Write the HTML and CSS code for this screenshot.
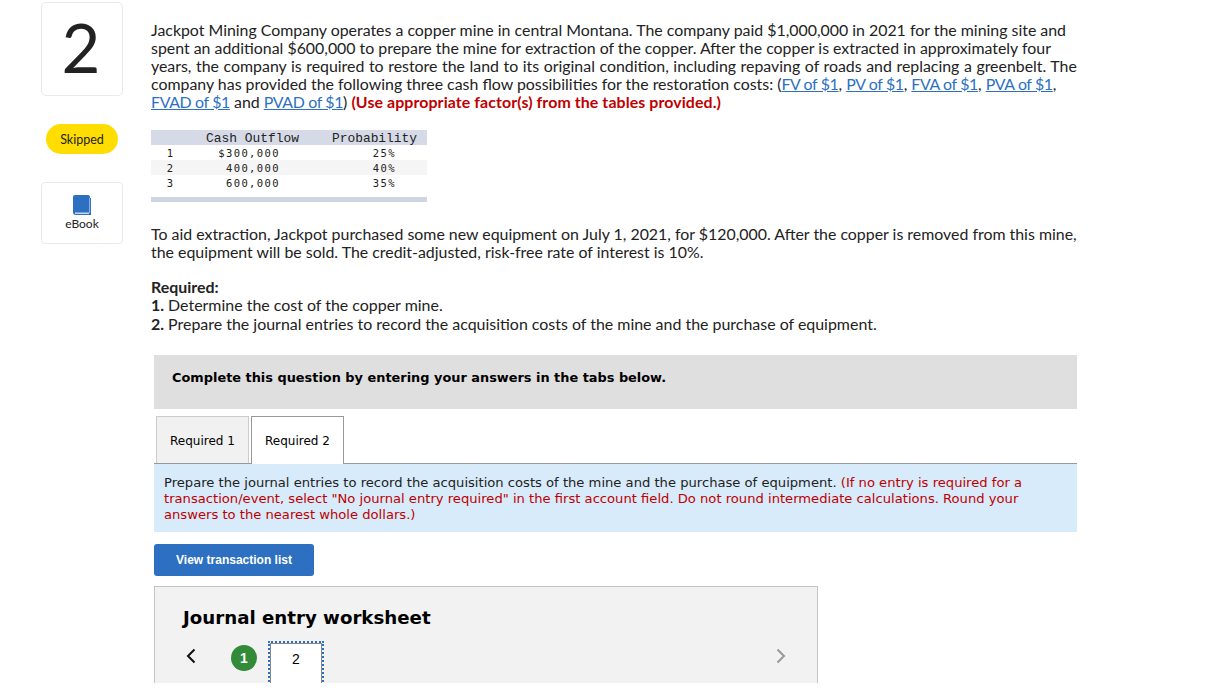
FILE: index.html
```html
<!DOCTYPE html>
<html lang="en">
<head>
    <meta charset="UTF-8">
    <title>Question 2</title>
    <link rel="stylesheet" href="styles.css">
</head>
<body>
    <div class="page">
        <div class="side">
            <div class="number">2</div>
            <div class="skipped">Skipped</div>
            <div class="ebook">
                <svg class="book" width="18" height="20" viewBox="0 0 18 20">
                    <path d="M2 0h13a2 2 0 0 1 2 2v1h1v17H3a3 3 0 0 1-3-3V2a2 2 0 0 1 2-2z" fill="#2d70c2"/>
                    <path d="M2 18.2h14" stroke="#dce9f7" stroke-width="1.3" fill="none"/>
                    <path d="M16.6 3v15" stroke="#a9c6e8" stroke-width=".8" fill="none"/>
                </svg>
                <span>eBook</span>
            </div>
        </div>
        <div class="main">
            <p class="question">Jackpot Mining Company operates a copper mine in central Montana. The company paid $1,000,000 in 2021 for the mining site and<br>
            spent an additional $600,000 to prepare the mine for extraction of the copper. After the copper is extracted in approximately four<br>
            <span class="wide">years, the company is required to restore the land to its original condition, including repaving of roads and replacing a greenbelt. The</span><br>
            company has provided the following three cash flow possibilities for the restoration costs: (<a href="#">FV of $1</a>, <a href="#">PV of $1</a>, <a href="#">FVA of $1</a>, <a href="#">PVA of $1</a>,<br>
            <a href="#">FVAD of $1</a> and <a href="#">PVAD of $1</a>) <b class="red">(Use appropriate factor(s) from the tables provided.)</b></p>

            <table class="flows">
                <tr class="head"><td class="c1"></td><td class="c2">Cash Outflow</td><td class="c3">Probability</td></tr>
                <tr><td class="c1">1</td><td class="c2 num">$300,000</td><td class="c3 num">25%</td></tr>
                <tr class="alt"><td class="c1">2</td><td class="c2 num">400,000</td><td class="c3 num">40%</td></tr>
                <tr><td class="c1">3</td><td class="c2 num">600,000</td><td class="c3 num">35%</td></tr>
                <tr class="spacer"><td colspan="3"></td></tr>
            </table>

            <p class="para aid">To aid extraction, Jackpot purchased some new equipment on July 1, 2021, for $120,000. After the copper is removed from this mine,<br>
            the equipment will be sold. The credit-adjusted, risk-free rate of interest is 10%.</p>

            <p class="para req"><b>Required:</b><br>
            <b>1.</b> Determine the cost of the copper mine.<br>
            <b>2.</b> Prepare the journal entries to record the acquisition costs of the mine and the purchase of equipment.</p>

            <div class="work">
                <div class="complete">Complete this question by entering your answers in the tabs below.</div>
                <div class="tabs">
                    <div class="tab">Required 1</div>
                    <div class="tab active">Required 2</div>
                </div>
                <div class="prompt">Prepare the journal entries to record the acquisition costs of the mine and the purchase of equipment. <span class="red">(If no entry is required for a<br>
                transaction/event, select "No journal entry required" in the first account field. Do not round intermediate calculations. Round your<br>
                answers to the nearest whole dollars.)</span></div>
                <button class="view">View transaction list</button>
                <div class="sheet">
                    <h3>Journal entry worksheet</h3>
                    <div class="steps">
                        <svg class="arrow" width="10" height="16" viewBox="0 0 10 16"><path d="M8.5 1.5 2 8l6.5 6.5" stroke="#111" stroke-width="2" fill="none"/></svg>
                        <span class="done">1</span>
                        <span class="current">2</span>
                        <svg class="arrow next" width="10" height="16" viewBox="0 0 10 16"><path d="M1.5 1.5 8 8l-6.5 6.5" stroke="#999" stroke-width="2" fill="none"/></svg>
                    </div>
                </div>
            </div>
        </div>
    </div>
</body>
</html>
```
FILE: styles.css
```css
html, body {
    margin: 0;
    background-color: white;
}
.page {
    display: flex;
    height: 683px;
    overflow: hidden;
    font-family: Lato, "Open Sans", sans-serif;
    color: #222;
}
.side {
    width: 82px;
    margin: 2px 0 0 41px;
    display: flex;
    flex-direction: column;
    align-items: center;
    flex-shrink: 0;
}
.number {
    box-sizing: border-box;
    width: 82px;
    height: 94px;
    padding-right: 2px;
    border: 1px solid #eaeaea;
    border-radius: 5px;
    text-align: center;
    font-size: 67px;
    line-height: 88px;
}
.skipped {
    width: 72px;
    height: 30px;
    margin-top: 28px;
    border-radius: 15px;
    background-color: #ffdd00;
    text-align: center;
    font-size: 12.5px;
    line-height: 31px;
}
.ebook {
    box-sizing: border-box;
    width: 82px;
    height: 62px;
    margin-top: 28px;
    border: 1px solid #eaeaea;
    border-radius: 4px;
    display: flex;
    flex-direction: column;
    align-items: center;
    font-size: 12px;
    line-height: 15px;
    padding-top: 12px;
}
.ebook span {
    margin-top: 1px;
}
.main {
    margin-left: 28px;
    width: 926px;
    padding-top: 21px;
    font-size: 15.9px;
    line-height: 18px;
}
.question, .para {
    margin: 0;
    white-space: nowrap;
}
.question a {
    color: #2d70c2;
    letter-spacing: -0.35px;
}
.question .red {
    letter-spacing: 0.1px;
}
.wide {
    word-spacing: 0.5px;
}
.red {
    color: #c00000;
}
.flows {
    margin-top: 19px;
    width: 276px;
    table-layout: fixed;
    border-collapse: collapse;
    border-bottom: 5px solid #ced6e3;
    font-family: "Liberation Mono", monospace;
    font-size: 12.9px;
    line-height: 13px;
}
.flows td {
    height: 13px;
    padding: 2px 0 0;
    text-align: center;
}
.flows .head {
    background-color: #d5dae6;
}
.flows .alt {
    background-color: #f5f5f5;
}
.flows .c1 {
    width: 38px;
    font-family: "DejaVu Sans Mono", monospace;
    font-size: 10.5px;
}
.flows .c2 {
    width: 127px;
}
.flows .head .c3 {
    padding-left: 6px;
}
.flows .num {
    font-family: "DejaVu Sans Mono", monospace;
    font-size: 10.5px;
    letter-spacing: 1.4px;
    text-align: right;
}
.flows .c2.num {
    padding-right: 36px;
}
.flows .c3.num {
    padding-right: 31px;
}
.flows .spacer td {
    height: 7px;
    padding: 0;
    line-height: 7px;
}
.aid {
    margin-top: 23px;
}
.req {
    margin-top: 17px;
    font-size: 15.95px;
    line-height: 18.4px;
}
.work {
    margin: 22px 0 0 3px;
    font-family: "DejaVu Sans", Verdana, sans-serif;
    color: black;
}
.complete {
    width: 923px;
    box-sizing: border-box;
    height: 54px;
    padding: 14px 18px;
    background-color: #dfdfdf;
    font-size: 12.9px;
    font-weight: bold;
}
.tabs {
    display: flex;
    gap: 2px;
    margin: 7px 0 0 2px;
    height: 47px;
}
.tab {
    box-sizing: border-box;
    width: 93px;
    height: 47px;
    border: 1px solid #ccc;
    border-bottom: none;
    background-color: #f1f1f1;
    font-size: 12px;
    line-height: 48px;
    text-align: center;
}
.tab.active {
    border-color: #999;
    background-color: white;
    height: 48px;
    position: relative;
    z-index: 1;
}
.prompt {
    box-sizing: border-box;
    width: 923px;
    height: 69px;
    padding: 11px 10px;
    border-top: 1px solid #999;
    background-color: #d7ebfa;
    font-size: 13.13px;
    line-height: 16px;
    white-space: nowrap;
    color: #222;
}
.view {
    display: block;
    width: 160px;
    height: 32px;
    margin-top: 12px;
    border: none;
    border-radius: 3px;
    background-color: #2d70c2;
    color: white;
    font-family: "Liberation Sans", Arial, sans-serif;
    font-size: 12px;
    font-weight: bold;
}
.sheet {
    box-sizing: border-box;
    width: 664px;
    height: 200px;
    margin-top: 10px;
    padding: 0 28px;
    border: 1px solid #c4c4c4;
    background-color: #f2f2f2;
}
.sheet h3 {
    margin: 18px 0 0;
    font-size: 18.2px;
    line-height: 26px;
}
.steps {
    display: flex;
    align-items: flex-start;
    margin-top: 14px;
}
.arrow {
    margin: 3px 0 0 3px;
}
.done {
    width: 26px;
    height: 26px;
    margin-left: 35px;
    border-radius: 50%;
    background-color: #338a38;
    color: white;
    text-align: center;
    font-family: "Liberation Sans", Arial, sans-serif;
    font-size: 14px;
    font-weight: bold;
    line-height: 26px;
}
.current {
    box-sizing: border-box;
    width: 52px;
    height: 60px;
    margin: -2px 0 0 13px;
    border: 1px solid #888;
    outline: 2px dotted #2d70c2;
    background-color: white;
    text-align: center;
    font-family: "Liberation Sans", Arial, sans-serif;
    font-size: 14px;
    line-height: 30px;
}
.arrow.next {
    margin-left: auto;
    margin-right: 3px;
}
```
